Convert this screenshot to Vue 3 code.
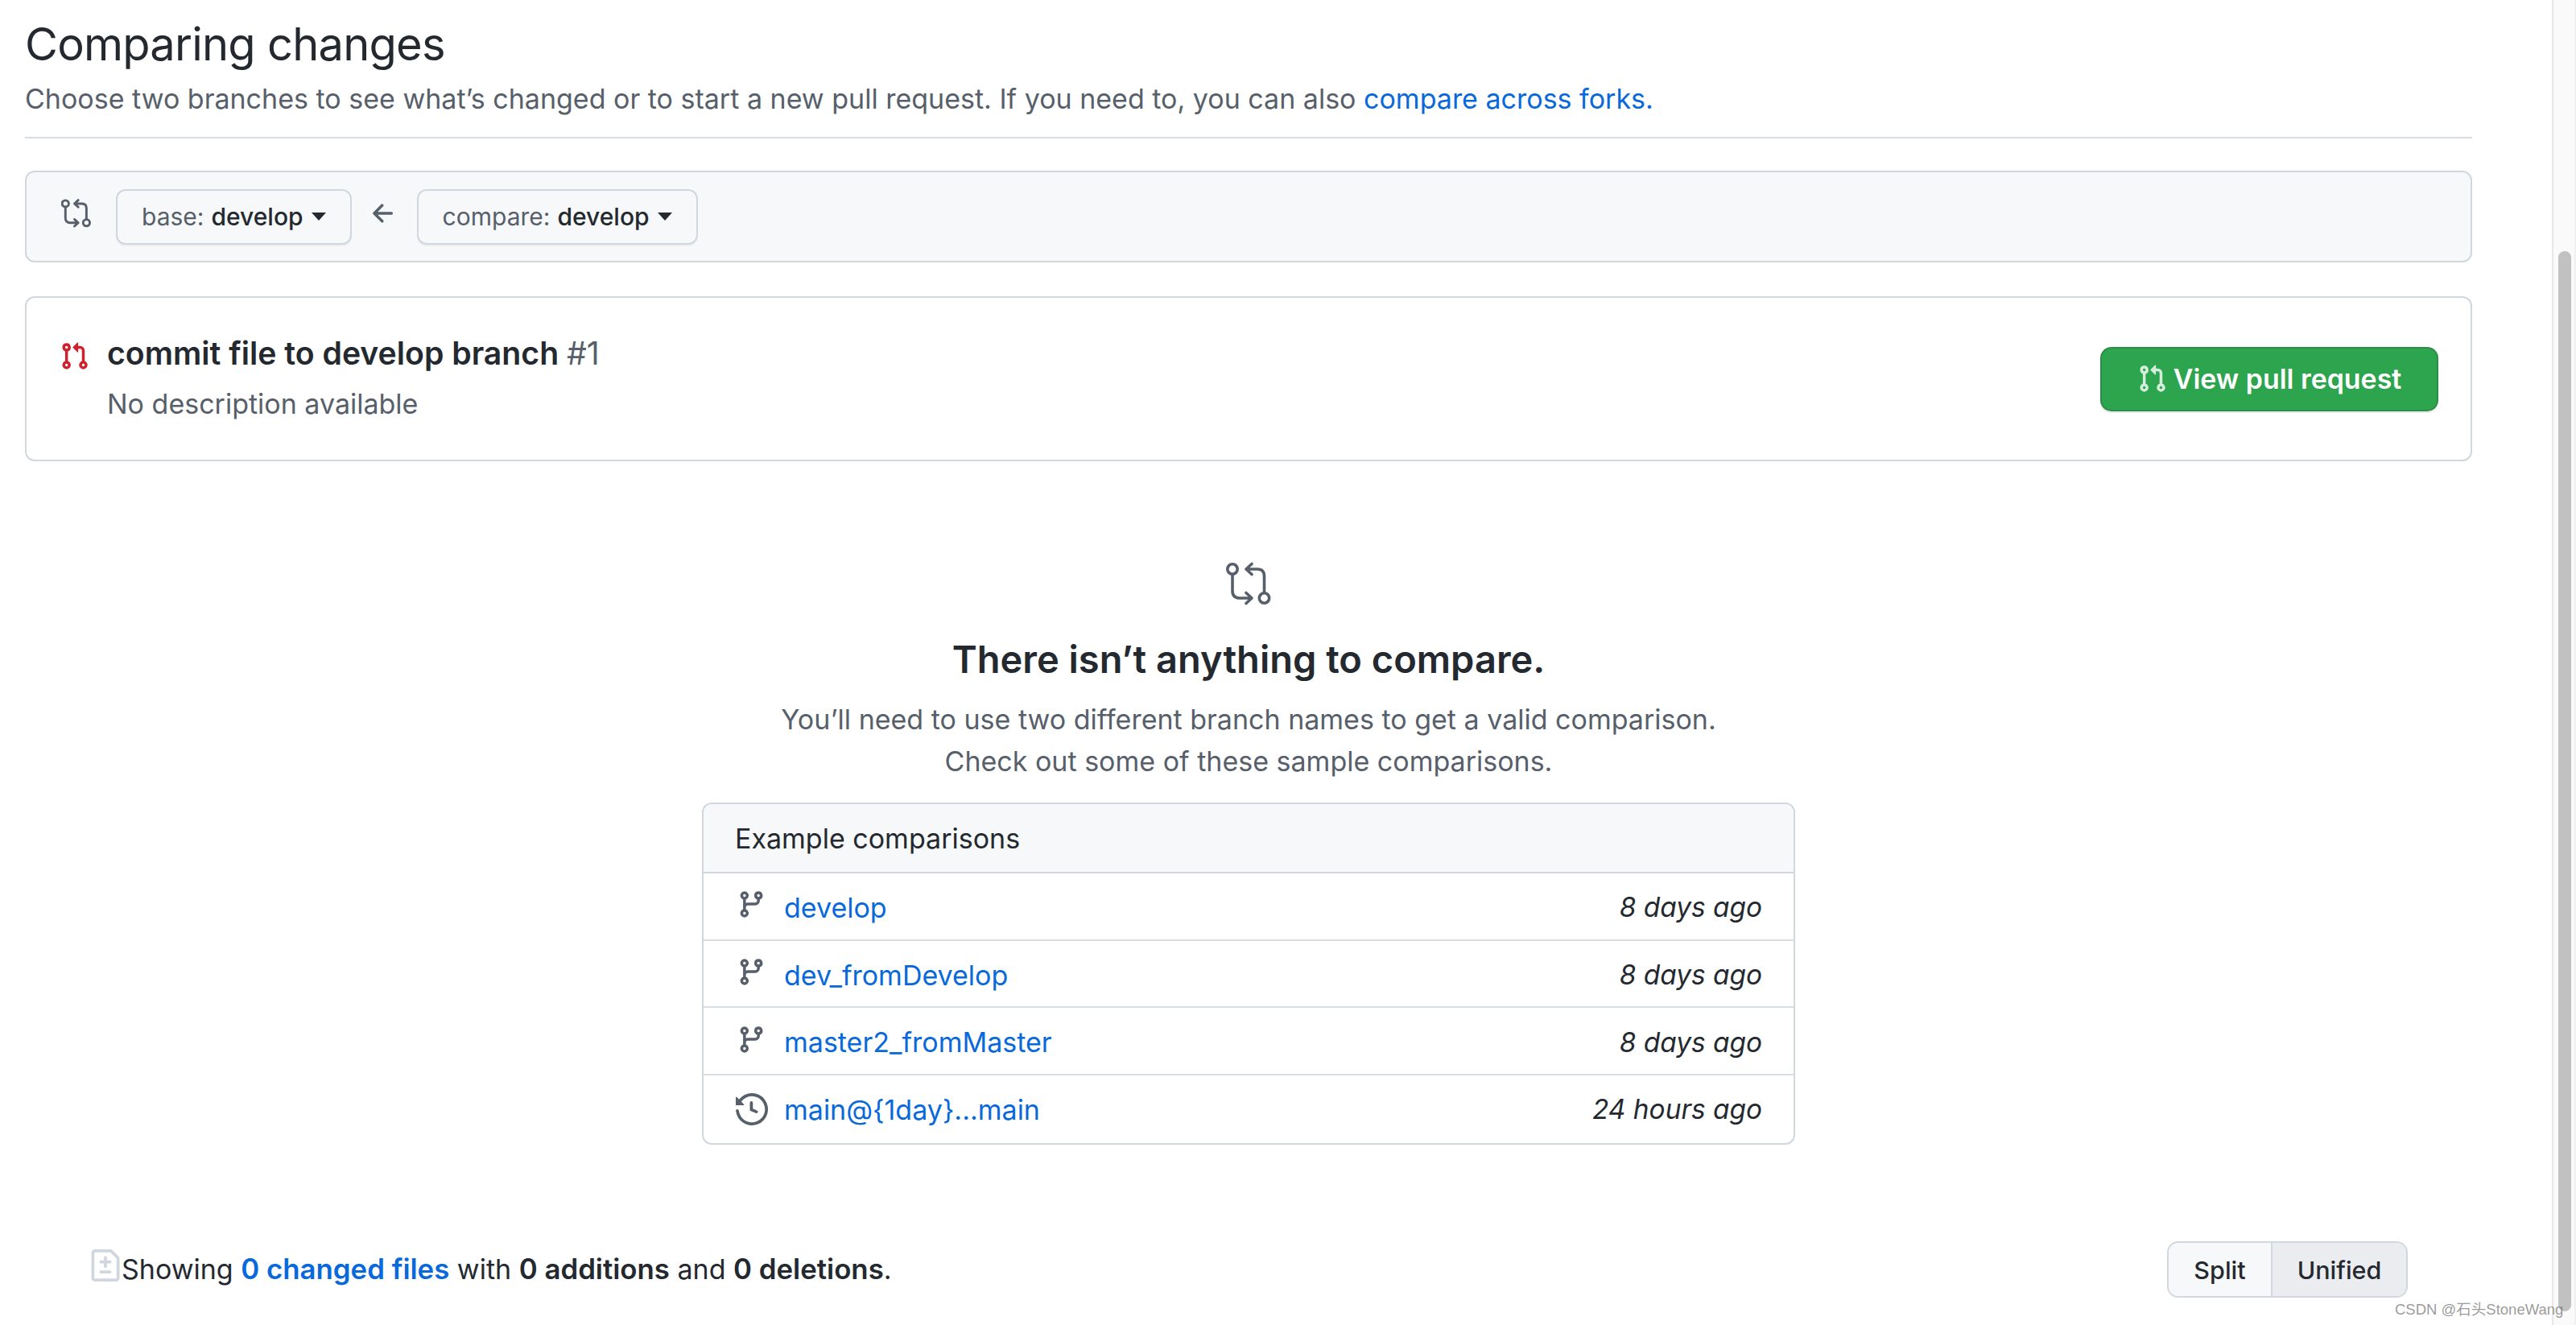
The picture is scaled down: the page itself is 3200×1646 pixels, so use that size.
<script setup>
const icons = {
  pull: 'M1.5 3.25a2.25 2.25 0 1 1 3 2.122v5.256a2.251 2.251 0 1 1-1.5 0V5.372A2.25 2.25 0 0 1 1.5 3.25Zm5.677-.177L9.573.677A.25.25 0 0 1 10 .854V2.5h1A2.5 2.5 0 0 1 13.5 5v5.628a2.251 2.251 0 1 1-1.5 0V5a1 1 0 0 0-1-1h-1v1.646a.25.25 0 0 1-.427.177L7.177 3.427a.25.25 0 0 1 0-.354ZM3.75 2.5a.75.75 0 1 0 0 1.5.75.75 0 0 0 0-1.5Zm0 9.5a.75.75 0 1 0 0 1.5.75.75 0 0 0 0-1.5Zm8.25.75a.75.75 0 1 0 1.5 0 .75.75 0 0 0-1.5 0Z',
  branch: 'M9.5 3.25a2.25 2.25 0 1 1 3 2.122V6A2.5 2.5 0 0 1 10 8.5H6a1 1 0 0 0-1 1v1.128a2.251 2.251 0 1 1-1.5 0V5.372a2.25 2.25 0 1 1 1.5 0v1.836A2.493 2.493 0 0 1 6 7h4a1 1 0 0 0 1-1v-.628A2.25 2.25 0 0 1 9.5 3.25Zm-6 0a.75.75 0 1 0 1.5 0 .75.75 0 0 0-1.5 0Zm8.25-.75a.75.75 0 1 0 0 1.5.75.75 0 0 0 0-1.5ZM4.25 12a.75.75 0 1 0 0 1.5.75.75 0 0 0 0-1.5Z',
  history: 'm.427 1.927 1.215 1.215a8.002 8.002 0 1 1-1.6 5.685.75.75 0 1 1 1.493-.154 6.5 6.5 0 1 0 1.18-4.458l1.358 1.358A.25.25 0 0 1 3.896 6H.25A.25.25 0 0 1 0 5.75V2.104a.25.25 0 0 1 .427-.177ZM7.75 4a.75.75 0 0 1 .75.75v2.992l2.028.812a.75.75 0 0 1-.557 1.392l-2.5-1A.751.751 0 0 1 7 8.25v-3.5A.75.75 0 0 1 7.75 4Z',
  diff: 'M1 1.75C1 .784 1.784 0 2.75 0h7.586c.464 0 .909.184 1.237.513l2.914 2.914c.329.328.513.773.513 1.237v9.586A1.75 1.75 0 0 1 13.25 16H2.75A1.75 1.75 0 0 1 1 14.25Zm1.75-.25a.25.25 0 0 0-.25.25v12.5c0 .138.112.25.25.25h10.5a.25.25 0 0 0 .25-.25V4.664a.25.25 0 0 0-.073-.177l-2.914-2.914a.25.25 0 0 0-.177-.073ZM8 3.25a.75.75 0 0 1 .75.75v1.5h1.5a.75.75 0 0 1 0 1.5h-1.5v1.5a.75.75 0 0 1-1.5 0V7h-1.5a.75.75 0 0 1 0-1.5h1.5V4A.75.75 0 0 1 8 3.25Zm-3 8a.75.75 0 0 1 .75-.75h4.5a.75.75 0 0 1 0 1.5h-4.5a.75.75 0 0 1-.75-.75Z',
  arrow: 'M7.78 12.53a.75.75 0 0 1-1.06 0L2.47 8.28a.75.75 0 0 1 0-1.06l4.25-4.25a.751.751 0 0 1 1.042.018.751.751 0 0 1 .018 1.042L4.81 7h7.44a.75.75 0 0 1 0 1.5H4.81l2.97 2.97a.75.75 0 0 1 0 1.06Z'
}
const compareLines = 'M8 15.5V36Q8 45 17 45H31M25 38.5L32 45L25 51.5M25 9H39Q47.5 9 47.5 18V38M32 2.5L25 9L32 15.5'
const rows = [
  { icon: 'branch', name: 'develop', time: '8 days ago' },
  { icon: 'branch', name: 'dev_fromDevelop', time: '8 days ago' },
  { icon: 'branch', name: 'master2_fromMaster', time: '8 days ago' },
  { icon: 'history', name: 'main@{1day}...main', time: '24 hours ago' }
]
</script>

<template>
  <div class="page">
    <main class="main">
      <header class="head">
        <h1 class="title">Comparing changes</h1>
        <p class="sub">Choose two branches to see what’s changed or to start a new pull request. If you need to, you can also <a class="link">compare across forks.</a></p>
      </header>

      <section class="range">
        <svg class="range-icon" viewBox="0 0 56 56" fill="none" stroke="#57606a" stroke-width="4.4" stroke-linecap="round" stroke-linejoin="round">
          <circle cx="8" cy="9" r="6.2" /><circle cx="47.5" cy="45" r="6.2" /><path :d="compareLines" />
        </svg>
        <button class="ref-btn"><span class="muted">base:</span> <b>develop</b><i class="caret"></i></button>
        <svg class="arrow" viewBox="0 0 16 16" fill="#57606a"><path :d="icons.arrow" /></svg>
        <button class="ref-btn"><span class="muted">compare:</span> <b>develop</b><i class="caret"></i></button>
      </section>

      <section class="card">
        <svg class="pr-icon" viewBox="0 0 16 16" fill="#cf222e"><path :d="icons.pull" /></svg>
        <div class="card-text">
          <div class="card-title">commit file to develop branch <span class="num">#1</span></div>
          <div class="card-desc">No description available</div>
        </div>
        <button class="green">
          <svg class="green-icon" viewBox="0 0 16 16" fill="#fff" fill-opacity=".8"><path :d="icons.pull" /></svg>
          View pull request
        </button>
      </section>

      <section class="blank">
        <svg class="blank-icon" viewBox="0 0 56 56" fill="none" stroke="#57606a" stroke-width="3.6" stroke-linecap="round" stroke-linejoin="round">
          <circle cx="8" cy="9" r="6.2" /><circle cx="47.5" cy="45" r="6.2" /><path :d="compareLines" />
        </svg>
        <h2 class="blank-title">There isn’t anything to compare.</h2>
        <p class="blank-text">You’ll need to use two different branch names to get a valid comparison.<br />Check out some of these sample comparisons.</p>
      </section>

      <section class="table">
        <div class="table-head">Example comparisons</div>
        <div v-for="r in rows" :key="r.name" class="row">
          <span class="row-icon">
            <svg :class="r.icon" viewBox="0 0 16 16" fill="#57606a"><path :d="icons[r.icon]" /></svg>
          </span>
          <a class="link">{{ r.name }}</a>
          <em class="time">{{ r.time }}</em>
        </div>
      </section>

      <footer class="foot">
        <svg class="diff-icon" viewBox="0 0 16 16" fill="#d0d7de"><path :d="icons.diff" /></svg>
        <div class="foot-text">Showing <a class="link strong">0 changed files</a> with <strong class="strong">0 additions</strong> and <strong class="strong">0 deletions</strong>.</div>
        <div class="toggle">
          <span class="seg">Split</span>
          <span class="seg on">Unified</span>
        </div>
      </footer>
    </main>
    <aside class="scroll"><div class="thumb"></div></aside>
    <div class="mark">CSDN @石头StoneWang</div>
  </div>
</template>

<style>
html, body { margin: 0; background: #fff; overflow: hidden; }
</style>

<style scoped>
.page {
  position: relative;
  display: flex;
  width: 3200px;
  height: 1646px;
  overflow: hidden;
  font-family: Inter, "Noto Sans", sans-serif;
  font-size: 34px;
  color: #24292f;
  background: #fff;
}
.main { width: 3170px; box-sizing: border-box; padding: 0 99px 0 31px; flex: none; }
.link { color: #0969da; }
.muted { color: #57606a; }

.head { padding-top: 20px; border-bottom: 2px solid #d8dee4; height: 172px; box-sizing: border-box; }
.title { margin: 0; font-size: 56px; font-weight: 400; line-height: 70px; letter-spacing: -.76px; }
.sub { margin: 9px 0 0; line-height: 48px; color: #57606a; }

.range {
  margin-top: 40px;
  height: 114px;
  box-sizing: border-box;
  display: flex;
  align-items: center;
  padding-left: 43px;
  background: #f6f8fa;
  border: 2px solid #d0d7de;
  border-radius: 12px;
}
.range-icon { width: 37px; height: 37px; margin: 0 31px 8px 0; flex: none; }
.ref-btn {
  height: 69px;
  box-sizing: border-box;
  padding: 0 30px;
  display: flex;
  align-items: center;
  gap: 9px;
  font: 500 30px Inter, sans-serif;
  color: #24292f;
  background: #f6f8fa;
  border: 2px solid #d0d7de;
  border-radius: 12px;
  box-shadow: 0 2px 0 rgba(27, 31, 36, .04);
}
.ref-btn .muted { font-weight: 400; }
.ref-btn b { font-weight: 500; }
.caret {
  width: 0;
  height: 0;
  border-left: 9px solid transparent;
  border-right: 9px solid transparent;
  border-top: 10px solid #24292f;
  margin-left: 1px;
}
.arrow { width: 37px; height: 37px; margin: 0 23px 8px 21px; flex: none; }

.card {
  margin-top: 42px;
  height: 205px;
  box-sizing: border-box;
  display: flex;
  align-items: center;
  padding: 0 40px 0 41px;
  border: 2px solid #d0d7de;
  border-radius: 12px;
}
.pr-icon { width: 37px; height: 37px; margin: 0 22px 56px 0; flex: none; }
.card-text { flex: 1; }
.card-title { font-size: 39.2px; font-weight: 600; line-height: 48px; }
.num { font-weight: 400; color: #57606a; }
.card-desc { margin-top: 15px; line-height: 48px; color: #57606a; }
.green {
  width: 420px;
  height: 80px;
  box-sizing: border-box;
  display: flex;
  align-items: center;
  justify-content: center;
  gap: 8px;
  font: 600 33.9px Inter, sans-serif;
  color: #fff;
  background: #2da44e;
  border: 2px solid rgba(27, 31, 36, .15);
  border-radius: 14px;
  box-shadow: 0 2px 0 rgba(27, 31, 36, .1);
}
.green-icon { width: 37px; height: 37px; flex: none; }

.blank { margin-top: 125px; text-align: center; }
.blank-icon { display: block; margin: 0 auto; width: 56px; height: 56px; }
.blank-title { margin: 36px 0 0; font-size: 47px; font-weight: 600; line-height: 58px; }
.blank-text { margin: 20px 0 0; line-height: 52px; color: #57606a; }

.table {
  margin: 25px auto 0;
  width: 1358px;
  box-sizing: border-box;
  border: 2px solid #d0d7de;
  border-radius: 12px;
  overflow: hidden;
}
.table-head {
  height: 86px;
  box-sizing: border-box;
  padding-left: 39px;
  display: flex;
  align-items: center;
  background: #f6f8fa;
  border-bottom: 2px solid #d0d7de;
}
.row {
  height: 83.7px;
  box-sizing: border-box;
  padding: 3px 39px 0 41px;
  display: flex;
  align-items: center;
  border-bottom: 2px solid #d8dee4;
}
.row:last-child { border-bottom: 0; height: 84px; padding-top: 0; }
.row-icon { width: 59px; flex: none; display: flex; }
.branch { width: 37px; height: 37px; margin-bottom: 7px; }
.history { width: 40px; height: 40px; margin-left: -1px; }
.time { margin-left: auto; font-size: 33.4px; }

.foot {
  margin-top: 120px;
  padding: 0 80px 0 80px;
  height: 70px;
  display: flex;
  align-items: center;
}
.diff-icon { width: 40px; height: 40px; flex: none; margin-bottom: 10px; }
.foot-text { flex: 1; padding-bottom: 3px; }
.strong { font-weight: 600; font-size: 34.8px; }
.toggle {
  display: flex;
  height: 70px;
  box-sizing: border-box;
  font-size: 30.5px;
  font-weight: 500;
  border: 2px solid #d0d7de;
  border-radius: 14px;
  overflow: hidden;
}
.seg {
  display: flex;
  align-items: center;
  justify-content: center;
  background: #f6f8fa;
  width: 127px;
}
.seg.on { width: 166px; background: #eaecef; border-left: 2px solid #d0d7de; }

.scroll {
  flex: none;
  width: 30px;
  box-sizing: border-box;
  background: #fafafa;
  border-left: 2px solid #e8e8e8;
  border-right: 2px solid #f0f0f0;
  padding: 312px 0 0 6px;
}
.thumb { width: 16px; height: 1317px; border-radius: 8px; background: #c1c1c1; }

.mark {
  position: absolute;
  left: 2975px;
  top: 1616px;
  font: 18.5px/22px "Liberation Sans", "Noto Sans CJK SC", sans-serif;
  color: rgba(110, 110, 110, .7);
  white-space: nowrap;
}
</style>
